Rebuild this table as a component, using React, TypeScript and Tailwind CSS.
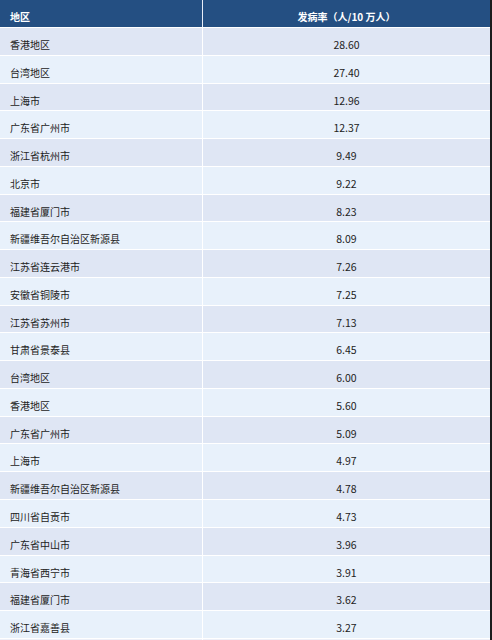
const rows: [string, string][] = [
  ["香港地区", "28.60"],
  ["台湾地区", "27.40"],
  ["上海市", "12.96"],
  ["广东省广州市", "12.37"],
  ["浙江省杭州市", "9.49"],
  ["北京市", "9.22"],
  ["福建省厦门市", "8.23"],
  ["新疆维吾尔自治区新源县", "8.09"],
  ["江苏省连云港市", "7.26"],
  ["安徽省铜陵市", "7.25"],
  ["江苏省苏州市", "7.13"],
  ["甘肃省景泰县", "6.45"],
  ["台湾地区", "6.00"],
  ["香港地区", "5.60"],
  ["广东省广州市", "5.09"],
  ["上海市", "4.97"],
  ["新疆维吾尔自治区新源县", "4.78"],
  ["四川省自贡市", "4.73"],
  ["广东省中山市", "3.96"],
  ["青海省西宁市", "3.91"],
  ["福建省厦门市", "3.62"],
  ["浙江省嘉善县", "3.27"],
];

export default function App() {
  return (
    <div
      className="w-[492px] h-[640px] overflow-hidden bg-white flex"
      style={{ fontFamily: '"Noto Sans CJK SC", "Noto Sans", sans-serif' }}
    >
      <div className="w-[490px] flex flex-col">
        {/* header */}
        <div className="flex h-[27px] shrink-0 bg-[#244f82] text-white text-[10px] font-bold leading-[14px]">
          <div className="w-[203px] pt-[10px] pl-[10px] border-r border-[#e8eef8]">地区</div>
          <div className="flex-1 pt-[10px] text-center">发病率（人/10 万人）</div>
        </div>

        {rows.map(([area, rate], i) => (
          <div
            key={i}
            className={`flex h-[27.77px] shrink-0 border-t border-white text-[10px] leading-[14px] text-[#222] ${
              i % 2 === 0 ? "bg-[#dfe6f4]" : "bg-[#e8f1fb]"
            }`}
          >
            <div className="w-[203px] pt-[10px] pl-[10px] border-r border-white">{area}</div>
            <div className="flex-1 pt-[10px] text-center text-[10.5px]">{rate}</div>
          </div>
        ))}

        <div className="flex flex-1 border-t border-white bg-[#eef0f8]">
          <div className="w-[203px] border-r border-white" />
        </div>
      </div>
      <div className="w-[2px] bg-[#1b1b1b]" />
    </div>
  );
}
